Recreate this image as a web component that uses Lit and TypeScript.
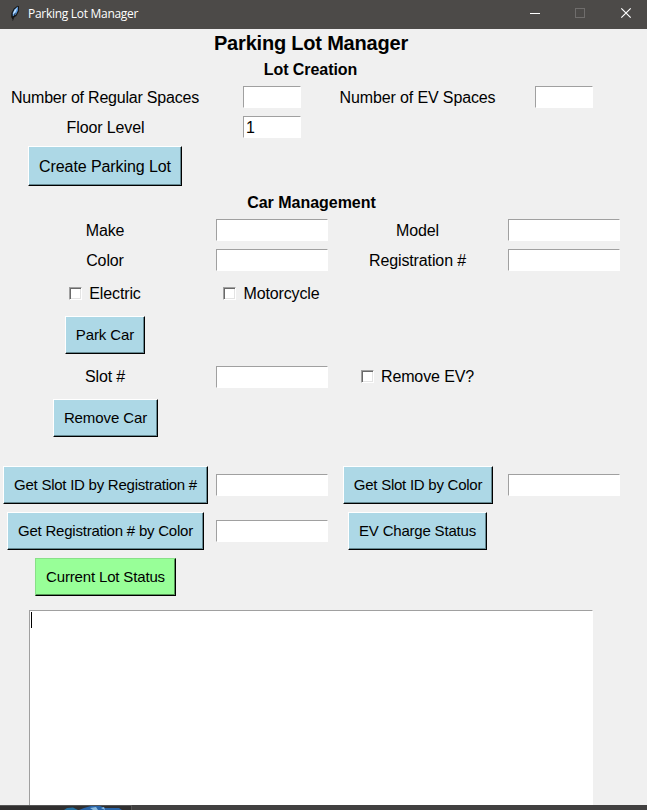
import { LitElement, html, css } from "lit";
import { customElement } from "lit/decorators.js";

@customElement("app-root")
export class AppRoot extends LitElement {
  static styles = css`
    :host {
      display: flex;
      flex-direction: column;
      width: 647px;
      height: 810px;
      overflow: hidden;
      background: #f0f0f0;
      color: #000;
      font: 16px/18px "Liberation Sans", Arial, sans-serif;
    }
    * { box-sizing: border-box; }
    .titlebar {
      display: flex;
      align-items: center;
      flex: none;
      height: 29px;
      padding-left: 8px;
      background: #4c4a48;
      color: #fff;
    }
    .feather { width: 14px; height: 16px; margin-right: 6px; margin-top: -3px; }
    .caption {
      flex: 1;
      margin-top: -1px;
      font: 12px/16px "Open Sans", "Noto Sans", sans-serif;
      letter-spacing: -0.29px;
      white-space: nowrap;
    }
    .controls { display: block; width: 137px; height: 29px; }
    .form {
      display: grid;
      flex: none;
      height: 581px;
      grid-template-columns: 211px 122px 170px 122px;
      grid-template-rows: 27px 26px 30px 30px 48px 25px 30px 30px 37px 46px 37px 67px 46px 46px 46px;
      align-items: center;
      justify-items: center;
      white-space: nowrap;
    }
    .wide { grid-column: 1 / -1; }
    .first { grid-column: 1; }
    .title {
      padding: 2px 3px 0 0;
      font-size: 20px;
      line-height: 23px;
      font-weight: bold;
      letter-spacing: -0.2px;
    }
    .heading { padding-right: 2px; font-weight: bold; letter-spacing: -0.02px; }
    .creation { padding: 2px 4px 0 0; letter-spacing: -0.05px; }
    .label { padding: 2px 1px 0 0; letter-spacing: -0.12px; }
    .slot-label { padding-top: 0; }
    .regular { letter-spacing: -0.21px; }
    .floor { padding-right: 0; }
    .entry {
      display: block;
      width: 112px;
      height: 22px;
      margin: 0;
      padding: 1px 2px 0;
      border: 1px solid #fff;
      border-top-color: #a0a0a0;
      border-left-color: #a0a0a0;
      border-radius: 0;
      background: #fff;
      color: #000;
      font: inherit;
      outline: none;
    }
    .small { width: 58px; }
    .button {
      align-self: start;
      height: 38px;
      margin: 4px 0 0;
      padding: 0;
      border: 1px solid #000;
      border-top-color: #fff;
      border-left-color: #fff;
      border-radius: 0;
      background: #add8e6;
      box-shadow: inset -1px -1px #648891;
      color: #000;
      font: 15px/18px "Liberation Sans", Arial, sans-serif;
      letter-spacing: -0.25px;
      white-space: nowrap;
    }
    .create {
      width: 154px;
      height: 40px;
      margin-right: 1px;
      padding-top: 1px;
      font-size: 16px;
      letter-spacing: -0.08px;
    }
    .park { width: 80px; margin-right: 1px; letter-spacing: -0.1px; }
    .remove { width: 105px; letter-spacing: -0.1px; }
    .slot-reg { width: 205px; }
    .slot-color { width: 150px; }
    .reg-color { width: 197px; letter-spacing: -0.22px; }
    .charge { width: 139px; margin-right: 1px; letter-spacing: -0.2px; }
    .status {
      width: 141px;
      background: #98ff98;
      border-top-color: #88e088;
      border-left-color: #88e088;
      box-shadow: inset -1px -1px #559555;
      letter-spacing: -0.16px;
    }
    .check {
      display: flex;
      align-items: center;
      gap: 7px;
      padding-right: 1px;
      letter-spacing: -0.12px;
    }
    .box {
      width: 13px;
      height: 13px;
      border: 1px solid #fff;
      border-top-color: #a0a0a0;
      border-left-color: #a0a0a0;
      background: #fff;
      box-shadow: inset 1px 1px #696969, inset -1px -1px #e3e3e3;
    }
    .output {
      flex: 1;
      width: 564px;
      margin-left: 29px;
      padding: 1px;
      border: 1px solid #a0a0a0;
      border-right-color: #fff;
      border-bottom: 0;
      background: #fff;
    }
    .caret { width: 1px; height: 16px; background: #000; }
    .taskbar { display: block; flex: none; width: 647px; height: 5px; }
  `;

  private label(text: string, kind = "") {
    return html`<span class="label ${kind}">${text}</span>`;
  }

  private check(label: string) {
    return html`<label class="check"><span class="box"></span><span>${label}</span></label>`;
  }

  private entry(value = "", size = "") {
    return html`<input class="entry ${size}" .value=${value} />`;
  }

  private button(kind: string, label: string) {
    return html`<button class="button ${kind}">${label}</button>`;
  }

  render() {
    return html`
      <header class="titlebar">
        <svg class="feather" viewBox="0 0 14 16">
          <path d="M4.5 14.5L3.2 12 3.4 8 5.8 3.5 9.5.8l1.5.4-.2 5.2-2.4 4.5-3 1.8z" fill="#151515" />
          <path d="M4.8 11.3L4.7 8 6.7 4.3 10 1.5 9.8 5.8 7.8 9.8z" fill="#5b9ae0" />
          <path d="M5 9.3L6 6 9.2 2.2 8 6 6 9z" fill="#c5e4ff" />
          <path d="M7.2 8.2L4.7 15.6" stroke="#111" stroke-width=".8" />
        </svg>
        <span class="caption">Parking Lot Manager</span>
        <svg class="controls" viewBox="0 0 137 29" fill="none" shape-rendering="crispEdges">
          <path d="M20 13.5h10" stroke="#fff" />
          <rect x="65.5" y="8.5" width="9" height="9" stroke="#6f6d6c" />
          <path d="M111.3 8.3l9.4 9.4M120.7 8.3l-9.4 9.4" stroke="#fff" stroke-width="1.2" shape-rendering="auto" />
        </svg>
      </header>
      <main class="form">
        <span class="wide title">Parking Lot Manager</span>
        <span class="wide heading creation">Lot Creation</span>

        ${this.label("Number of Regular Spaces", "regular")}${this.entry("", "small")}
        ${this.label("Number of EV Spaces")}${this.entry("", "small")}
        ${this.label("Floor Level", "floor")}${this.entry("1", "small")}
        ${this.button("create first", "Create Parking Lot")}

        <span class="wide heading">Car Management</span>
        ${this.label("Make")}${this.entry()}${this.label("Model")}${this.entry()}
        ${this.label("Color")}${this.entry()}${this.label("Registration #")}${this.entry()}
        ${this.check("Electric")}${this.check("Motorcycle")}
        ${this.button("park first", "Park Car")}
        ${this.label("Slot #", "slot-label first")}${this.entry()}${this.check("Remove EV?")}
        ${this.button("remove first", "Remove Car")}

        ${this.button("slot-reg first", "Get Slot ID by Registration #")}${this.entry()}
        ${this.button("slot-color", "Get Slot ID by Color")}${this.entry()}
        ${this.button("reg-color", "Get Registration # by Color")}${this.entry()}
        ${this.button("charge", "EV Charge Status")}
        ${this.button("status first", "Current Lot Status")}
      </main>
      <div class="output"><div class="caret"></div></div>
      <svg class="taskbar" viewBox="0 0 647 5">
        <path d="M0 0h647v5H0z" fill="#414040" />
        <path d="M0 0h132v5H0z" fill="#555" />
        <path d="M0 1h131v4H0z" fill="#302f2f" />
        <path d="M64 5l3-2 6-.5 5 2.5z" fill="#246f9f" />
        <path d="M79 5l5-2 7-2h9l5 2h14l3 2z" fill="#2864a8" />
        <path d="M90 3l6-1 2 3h-5zM101 3l3-1 1 3z" fill="#8dbce0" />
      </svg>
    `;
  }
}
